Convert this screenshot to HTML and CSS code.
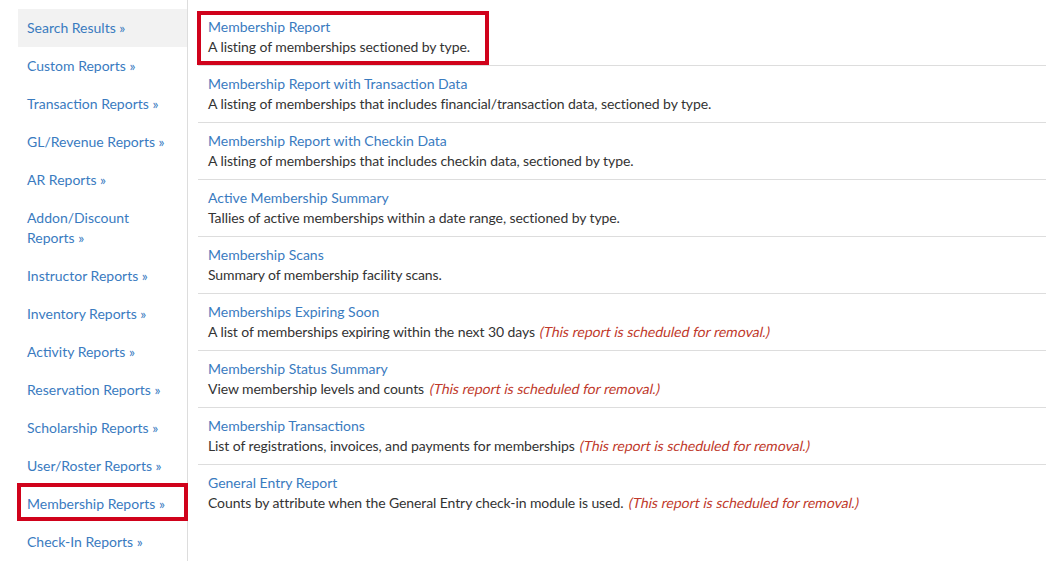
FILE: index.html
```html
<!DOCTYPE html>
<html lang="en">
<head>
<meta charset="utf-8">
<title>Membership Reports</title>
<link rel="stylesheet" href="styles.css">
</head>
<body>
<div class="page">
  <nav class="sidebar">
    <ul class="side-list">
      <li class="side-item active"><a href="#">Search Results »</a></li>
      <li class="side-item"><a href="#">Custom Reports »</a></li>
      <li class="side-item"><a href="#">Transaction Reports »</a></li>
      <li class="side-item"><a href="#">GL/Revenue Reports »</a></li>
      <li class="side-item"><a href="#">AR Reports »</a></li>
      <li class="side-item"><a href="#">Addon/Discount Reports »</a></li>
      <li class="side-item"><a href="#">Instructor Reports »</a></li>
      <li class="side-item"><a href="#">Inventory Reports »</a></li>
      <li class="side-item"><a href="#">Activity Reports »</a></li>
      <li class="side-item"><a href="#">Reservation Reports »</a></li>
      <li class="side-item"><a href="#">Scholarship Reports »</a></li>
      <li class="side-item"><a href="#">User/Roster Reports »</a></li>
      <li class="side-item highlighted"><a href="#">Membership Reports »</a><span class="mark mark-side"></span></li>
      <li class="side-item"><a href="#">Check-In Reports »</a></li>
    </ul>
  </nav>
  <main class="content">
    <ul class="report-list">
      <li class="report highlighted">
        <a href="#" class="report-title">Membership Report</a>
        <div class="report-desc">A listing of memberships sectioned by type.</div>
        <span class="mark mark-main"></span>
      </li>
      <li class="report">
        <a href="#" class="report-title">Membership Report with Transaction Data</a>
        <div class="report-desc">A listing of memberships that includes financial/transaction data, sectioned by type.</div>
      </li>
      <li class="report">
        <a href="#" class="report-title">Membership Report with Checkin Data</a>
        <div class="report-desc">A listing of memberships that includes checkin data, sectioned by type.</div>
      </li>
      <li class="report">
        <a href="#" class="report-title">Active Membership Summary</a>
        <div class="report-desc">Tallies of active memberships within a date range, sectioned by type.</div>
      </li>
      <li class="report">
        <a href="#" class="report-title">Membership Scans</a>
        <div class="report-desc">Summary of membership facility scans.</div>
      </li>
      <li class="report">
        <a href="#" class="report-title">Memberships Expiring Soon</a>
        <div class="report-desc">A list of memberships expiring within the next 30 days <em class="removal">(This report is scheduled for removal.)</em></div>
      </li>
      <li class="report">
        <a href="#" class="report-title">Membership Status Summary</a>
        <div class="report-desc">View membership levels and counts <em class="removal">(This report is scheduled for removal.)</em></div>
      </li>
      <li class="report">
        <a href="#" class="report-title">Membership Transactions</a>
        <div class="report-desc">List of registrations, invoices, and payments for memberships <em class="removal">(This report is scheduled for removal.)</em></div>
      </li>
      <li class="report last">
        <a href="#" class="report-title">General Entry Report</a>
        <div class="report-desc">Counts by attribute when the General Entry check-in module is used. <em class="removal">(This report is scheduled for removal.)</em></div>
      </li>
    </ul>
  </main>
</div>
</body>
</html>
```

FILE: styles.css
```css
* { box-sizing: border-box; }

html, body {
  margin: 0;
  padding: 0;
  background: #ffffff;
}

body {
  font-family: Lato, "Open Sans", Arial, sans-serif;
  font-size: 14px;
  line-height: 20px;
  color: #333333;
  height: 561px;
  overflow: hidden;
}

a {
  color: #3a7bbf;
  text-decoration: none;
}

.page {
  display: flex;
  align-items: stretch;
  min-height: 561px;
}

.sidebar {
  width: 188px;
  padding-left: 18px;
  padding-top: 9px;
  border-right: 1px solid #dddddd;
  flex: none;
}

.side-list {
  list-style: none;
  margin: 0;
  padding: 0;
}

.side-item {
  position: relative;
  padding: 9px 18px 9px 9px;
}

.side-item.active {
  background: #f2f2f2;
}

.content {
  flex: 1;
  padding-left: 10px;
  padding-top: 9px;
}

.report-list {
  list-style: none;
  margin: 0;
  padding: 0;
}

.report {
  position: relative;
  padding: 8px 10px 8px 10px;
  border-bottom: 1px solid #dddddd;
}

.report.last {
  border-bottom: none;
}

.report-title {
  display: block;
}

.report-desc {
  color: #333333;
  letter-spacing: -0.09px;
}

.removal {
  display: inline-block;
  color: #c0392b;
  font-style: normal;
  letter-spacing: 0;
  transform: skewX(-12deg);
  transform-origin: 0 100%;
}

.mark {
  position: absolute;
  border: 4px solid #d0021b;
  pointer-events: none;
}

.mark-main {
  left: -1px;
  top: 2px;
  width: 292px;
  height: 54px;
}

.mark-side {
  left: -1px;
  top: -2px;
  right: -1px;
  bottom: 2px;
}
```
